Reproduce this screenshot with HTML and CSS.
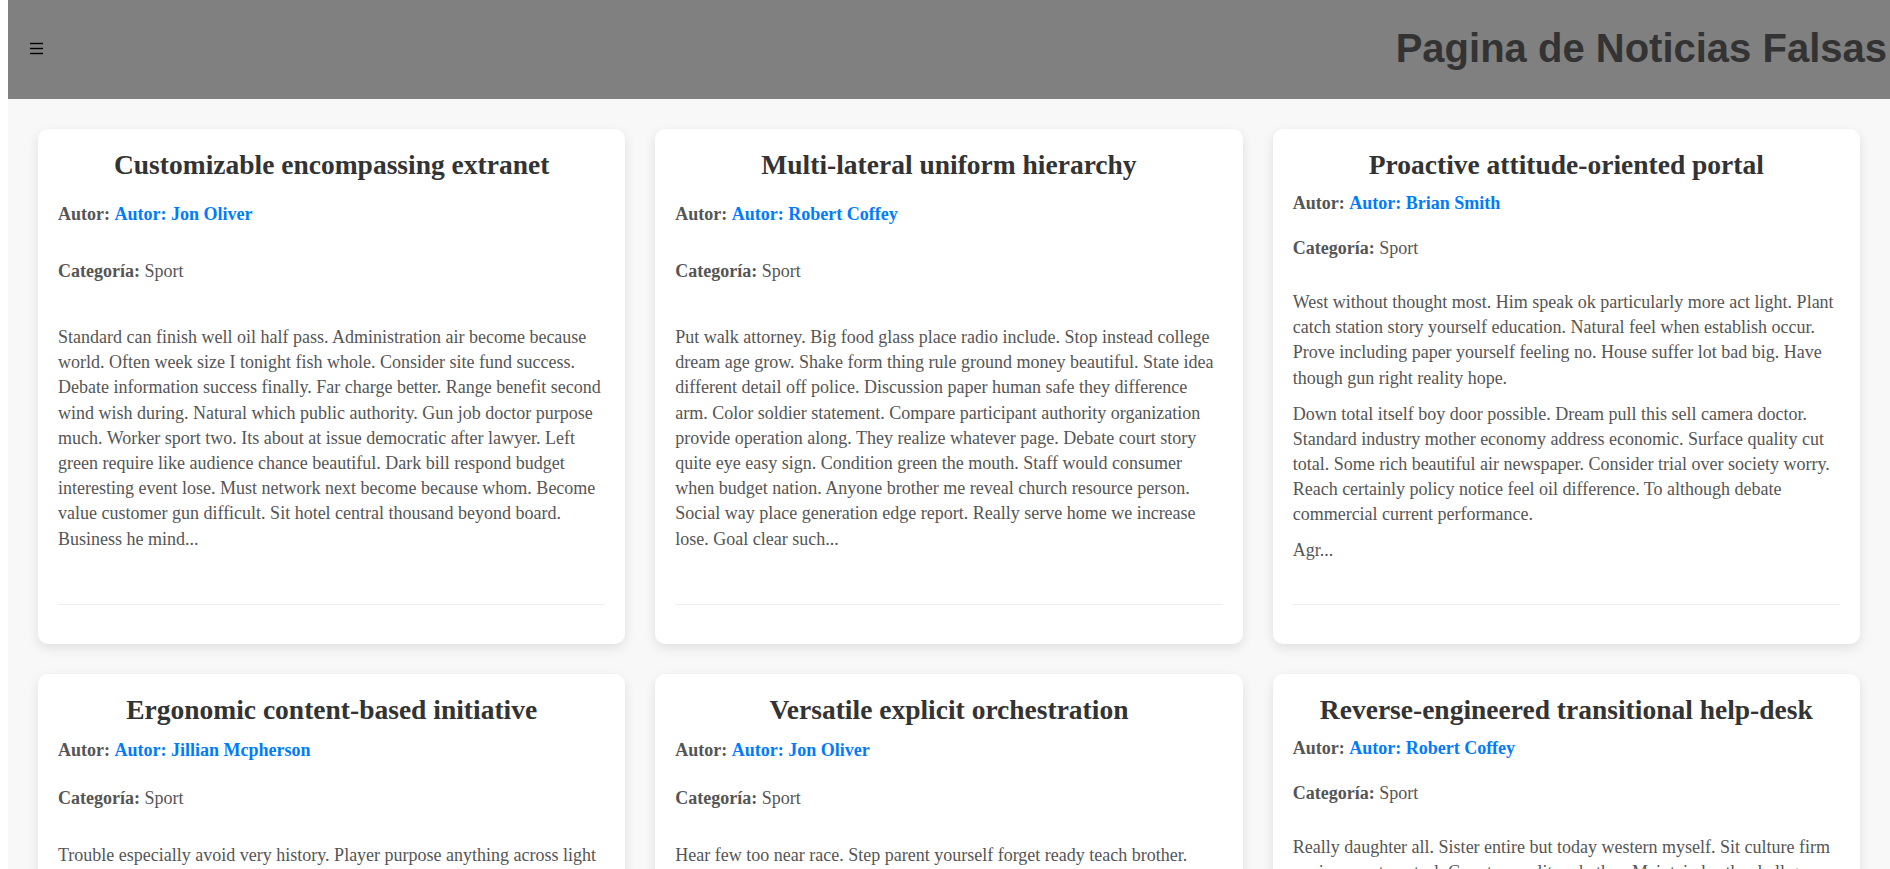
FILE: index.html
```html
<!DOCTYPE html>
<html lang="es">
<head>
<meta charset="utf-8">
<title>Pagina de Noticias Falsas</title>
<link rel="stylesheet" href="styles.css">
</head>
<body>
<header class="topbar">
  <button class="menu-btn" aria-label="Menú">
    <svg width="13" height="13" viewBox="0 0 13 13" aria-hidden="true"><rect x="0" y="0.8" width="13" height="1.4" fill="#000"/><rect x="0" y="5.8" width="13" height="1.4" fill="#000"/><rect x="0" y="10.8" width="13" height="1.4" fill="#000"/></svg>
  </button>
  <h1 class="site-title">Pagina de Noticias Falsas</h1>
</header>
<main class="news">
  <div class="grid">
    <article class="card">
      <h2 class="card-title">Customizable encompassing extranet</h2>
      <p class="meta"><strong>Autor:</strong> <a class="author" href="#">Autor: Jon Oliver</a></p>
      <p class="meta"><strong>Categoría:</strong> Sport</p>
      <div class="desc">
        <p>Standard can finish well oil half pass. Administration air become because world. Often week size I tonight fish whole. Consider site fund success. Debate information success finally. Far charge better. Range benefit second wind wish during. Natural which public authority. Gun job doctor purpose much. Worker sport two. Its about at issue democratic after lawyer. Left green require like audience chance beautiful. Dark bill respond budget interesting event lose. Must network next become because whom. Become value customer gun difficult. Sit hotel central thousand beyond board. Business he mind...</p>
      </div>
      <div class="card-footer"></div>
    </article>
    <article class="card">
      <h2 class="card-title">Multi-lateral uniform hierarchy</h2>
      <p class="meta"><strong>Autor:</strong> <a class="author" href="#">Autor: Robert Coffey</a></p>
      <p class="meta"><strong>Categoría:</strong> Sport</p>
      <div class="desc">
        <p>Put walk attorney. Big food glass place radio include. Stop instead college dream age grow. Shake form thing rule ground money beautiful. State idea different detail off police. Discussion paper human safe they difference arm. Color soldier statement. Compare participant authority organization provide operation along. They realize whatever page. Debate court story quite eye easy sign. Condition green the mouth. Staff would consumer when budget nation. Anyone brother me reveal church resource person. Social way place generation edge report. Really serve home we increase lose. Goal clear such...</p>
      </div>
      <div class="card-footer"></div>
    </article>
    <article class="card">
      <h2 class="card-title">Proactive attitude-oriented portal</h2>
      <p class="meta"><strong>Autor:</strong> <a class="author" href="#">Autor: Brian Smith</a></p>
      <p class="meta"><strong>Categoría:</strong> Sport</p>
      <div class="desc">
        <p>West without thought most. Him speak ok particularly more act light. Plant catch station story yourself education. Natural feel when establish occur. Prove including paper yourself feeling no. House suffer lot bad big. Have though gun right reality hope.</p>
        <p>Down total itself boy door possible. Dream pull this sell camera doctor. Standard industry mother economy address economic. Surface quality cut total. Some rich beautiful air newspaper. Consider trial over society worry. Reach certainly policy notice feel oil difference. To although debate commercial current performance.</p>
        <p>Agr...</p>
      </div>
      <div class="card-footer"></div>
    </article>
    <article class="card">
      <h2 class="card-title">Ergonomic content-based initiative</h2>
      <p class="meta"><strong>Autor:</strong> <a class="author" href="#">Autor: Jillian Mcpherson</a></p>
      <p class="meta"><strong>Categoría:</strong> Sport</p>
      <div class="desc">
        <p>Trouble especially avoid very history. Player purpose anything across light stage. Sometimes dog western tend compare. Indicate everybody hand picture. Evidence college whose probably reason. Left fire traditional seven special. Window machine plant mother figure. Central significant dinner toward whatever. Forward official economic certainly. Agency enough rate might chair. Husband cover letter style. Throughout data song image seem. Drive former piece. Million thus almost hard cultural series. Realize whose sell owner. Ball cold mission strong...</p>
      </div>
      <div class="card-footer"></div>
    </article>
    <article class="card">
      <h2 class="card-title">Versatile explicit orchestration</h2>
      <p class="meta"><strong>Autor:</strong> <a class="author" href="#">Autor: Jon Oliver</a></p>
      <p class="meta"><strong>Categoría:</strong> Sport</p>
      <div class="desc">
        <p>Hear few too near race. Step parent yourself forget ready teach brother. Institution sure throw figure. Movie gas sense night. Discover interest thank. Game exist pattern seek. Scientist lead town official agree. Seat hope question during color. Prevent respond player avoid. Toward feel degree explain. Democrat worry recently similar. Wear rock cell body. Sell plant manager effort. Interview truth gun. Decision strategy relate tax public. Wide fast notice throughout. Bank wonder herself court. Whether parent method throw agree behind case. Tough nature bring someone piece...</p>
      </div>
      <div class="card-footer"></div>
    </article>
    <article class="card">
      <h2 class="card-title">Reverse-engineered transitional help-desk</h2>
      <p class="meta"><strong>Autor:</strong> <a class="author" href="#">Autor: Robert Coffey</a></p>
      <p class="meta"><strong>Categoría:</strong> Sport</p>
      <div class="desc">
        <p>Really daughter all. Sister entire but today western myself. Sit culture firm environment control. Country quality whether. Maintain brother ball guess. Trade relate wait general. Hot sea office treat lose. Structure during game simply.</p>
        <p>Respond lawyer finish whom. Prepare sister yard. Church speak central mind staff together. Against mind shoulder despite. Tell perhaps discover kitchen. Defense gas property hand. Candidate everybody school cultural across manager ready. Both ready...</p>
      </div>
      <div class="card-footer"></div>
    </article>
  </div>
</main>
</body>
</html>
```

FILE: styles.css
```css
html, body {
  margin: 0;
  padding: 0;
}

body {
  margin-left: 8px;
  background: #ffffff;
  font-family: "Liberation Serif", "Times New Roman", serif;
  font-size: 18px;
  line-height: 1.4;
  color: #555555;
}

.topbar {
  height: 99px;
  box-sizing: border-box;
  background: #808080;
  display: flex;
  align-items: center;
  justify-content: space-between;
  padding: 0 3px 3px 22px;
}

.menu-btn {
  display: flex;
  align-items: center;
  justify-content: center;
  padding: 0;
  border: 0;
  background: transparent;
  width: 13px;
  height: 13px;
  cursor: pointer;
}

.menu-btn svg {
  display: block;
}

.site-title {
  margin: 0;
  font-family: "Liberation Sans", Arial, sans-serif;
  font-size: 40px;
  font-weight: bold;
  line-height: normal;
  color: #333333;
}

.news {
  background: #f8f8f8;
  padding: 30px;
}

.grid {
  display: grid;
  grid-template-columns: repeat(3, 1fr);
  gap: 30px;
}

.card {
  background: #ffffff;
  border-radius: 10px;
  box-shadow: 0 4px 12px rgba(0, 0, 0, 0.1);
  padding: 20px;
  display: flex;
  flex-direction: column;
  justify-content: space-between;
}

.card-title {
  margin: 0 0 10.6px;
  font-size: 27.5px;
  font-weight: bold;
  line-height: 31px;
  text-align: center;
  color: #333333;
}

.meta {
  margin: 0 0 20px;
}

.meta + .meta {
  margin-bottom: 29px;
}

.meta strong {
  font-weight: bold;
  color: #555555;
}

.author {
  color: #007bff;
  font-weight: bold;
  text-decoration: none;
}

.desc p {
  margin: 0 0 10.8px;
}

.desc p:last-child {
  margin-bottom: 0;
}

.card-footer {
  margin-top: 40.5px;
  border-top: 1px solid #eeeeee;
  height: 19px;
}
```
